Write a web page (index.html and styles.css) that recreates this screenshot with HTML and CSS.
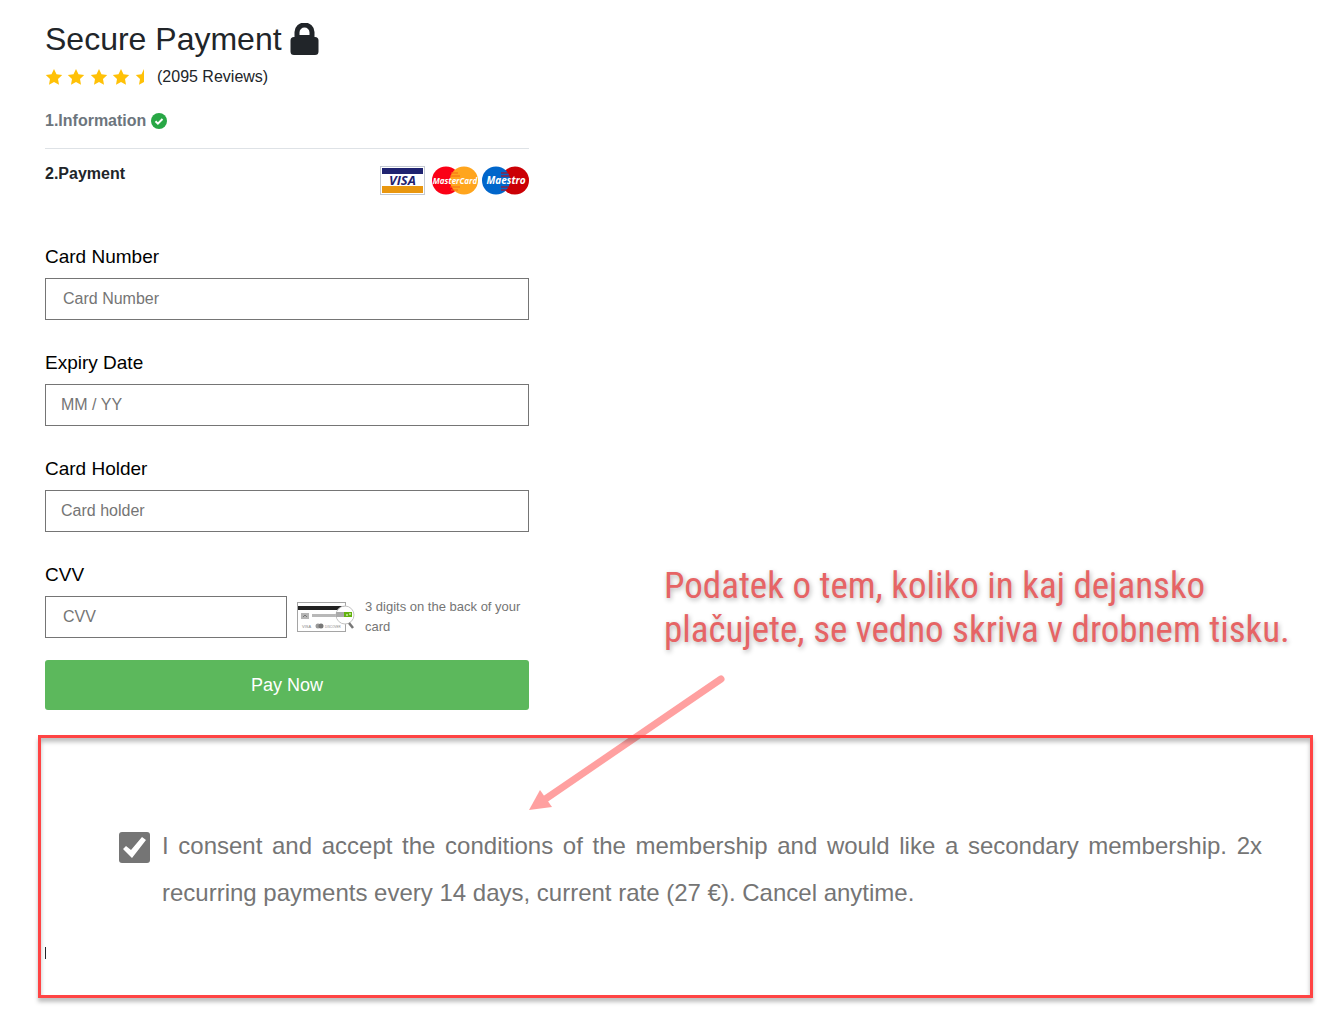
FILE: index.html
```
<!DOCTYPE html>
<html lang="en">
    <head>
        <meta charset="utf-8">
        <title>Secure Payment</title>
        <link rel="stylesheet" href="styles.css">
    </head>
    <body>
        <main class="page">
            <form class="checkout">
                <h1>Secure Payment
                    <svg class="lock" viewBox="0 0 28 32"><path d="M4 14V9a10 9.500 0 0 1 20 0v5h.5a3.500 3.500 0 0 1 3.500 3.500v11a3.500 3.500 0 0 1-3.500 3.500h-21A3.500 3.500 0 0 1 0 28.500v-11A3.500 3.500 0 0 1 3.500 14H4zm5-2h10V9.500a5 5 0 0 0-10 0V12z"/></svg>
                </h1>
                <div class="rating">
                    <svg class="stars" viewBox="0 0 102 18">
                        <defs>
                            <path id="star" d="M9 1l2.500 5.200 5.700.8-4.200 4 1 5.700L9 14l-5 2.700 1-5.700L.8 7l5.700-.8z"/>
                            <clipPath id="half"><rect x="0" y="0" width="9" height="18"/></clipPath>
                        </defs>
                        <use href="#star"/>
                        <use href="#star" x="22"/>
                        <use href="#star" x="45"/>
                        <use href="#star" x="67"/>
                        <g transform="translate(90 0)" clip-path="url(#half)"><use href="#star"/></g>
                    </svg>
                    <span>(2095 Reviews)</span>
                </div>
                <div class="step step-done">1.Information
                    <svg class="check" viewBox="0 0 16 16"><circle cx="8" cy="8" r="8"/><path d="M4.500 8.200l2.400 2.400 4.600-4.600"/></svg>
                </div>
                <div class="step step-current">
                    <span>2.Payment</span>
                    <svg class="cards" viewBox="0 0 149 30">
                        <rect x=".5" y=".5" width="44" height="28" fill="#fff" stroke="#c3c9d2"/>
                        <rect x="2" y="2" width="41" height="6" fill="#1f2370"/>
                        <rect x="2" y="20" width="41" height="7" fill="#e9970f"/>
                        <text class="visa" x="22.500" y="19">VISA</text>
                        <circle cx="66" cy="14.500" r="14" fill="#fb0016"/>
                        <circle cx="84" cy="14.500" r="14" fill="#ffa51d"/>
                        <path d="M71 7h7M70 10h10M70 21h10M71 24h7" stroke="#f76a15"/>
                        <text class="brand" x="75" y="18">MasterCard</text>
                        <circle cx="135" cy="14.500" r="14" fill="#cb0005"/>
                        <circle cx="116" cy="14.500" r="14" fill="#0066cb"/>
                        <path d="M121 7h7M121 10h8M121 21h8M121 24h7" stroke="#cb0005"/>
                        <text class="brand maestro" x="126" y="18">Maestro</text>
                    </svg>
                </div>

                <div class="field">
                    <label for="number">Card Number</label>
                    <input id="number" class="wide-pad" type="text" placeholder="Card Number">
                </div>
                <div class="field">
                    <label for="expiry">Expiry Date</label>
                    <input id="expiry" type="text" placeholder="MM / YY">
                </div>
                <div class="field">
                    <label for="holder">Card Holder</label>
                    <input id="holder" type="text" placeholder="Card holder">
                </div>
                <div class="field field-cvv">
                    <label for="cvv">CVV</label>
                    <div class="cvv-row">
                        <input id="cvv" class="wide-pad" type="text" placeholder="CVV">
                        <svg class="cvv-card" viewBox="0 0 58 30">
                            <rect x=".5" y=".5" width="48" height="29" fill="#fff" stroke="#a5a5a5"/>
                            <rect x="1" y="4" width="47" height="4" fill="#222"/>
                            <rect x="4" y="11" width="8" height="6" fill="#b5b5b5"/>
                            <path d="M6 15l2-2 2 2" fill="none" stroke="#777"/>
                            <rect x="15" y="12" width="28" height="3" fill="#b8b8b8"/>
                            <text x="5" y="26">VISA</text>
                            <circle cx="21" cy="24" r="2.500" fill="#999"/>
                            <circle cx="24" cy="24" r="2.500" fill="#777"/>
                            <text x="28" y="26" class="discover">DISCOVER</text>
                            <circle cx="48" cy="13" r="9" fill="#fff" stroke="#c4c4c4"/>
                            <rect x="39" y="10" width="8" height="5" fill="#aaa"/>
                            <rect x="47" y="10" width="8" height="5" fill="#63b30d"/>
                            <path d="M49 13h2m1-1h2" stroke="#fff"/>
                            <path d="M52 21l4 5" stroke="#777" stroke-width="2.500"/>
                        </svg>
                        <small>3 digits on the back of your card</small>
                    </div>
                </div>
                <button class="pay" type="submit">Pay Now</button>
            </form>

            <section class="fine-print">
                <input id="consent" type="checkbox" checked>
                <label for="consent">I consent and accept the conditions of the membership and would like a secondary membership. 2x recurring payments every 14 days, current rate (27 €). Cancel anytime.</label>
                <i class="caret"></i>
            </section>

            <p class="note" lang="sl">Podatek o tem, koliko in kaj dejansko plačujete, se vedno skriva v drobnem tisku.</p>
            <svg class="arrow" viewBox="0 0 200 142">
                <path d="M194 9L14 132" fill="none" stroke="#ff4444" stroke-width="7" stroke-linecap="round"/>
                <path d="M2 140l11-20 12 17z" fill="#ff4444"/>
            </svg>
        </main>
    </body>
</html>
```

FILE: styles.css
```
* { box-sizing: border-box; }
body { margin: 0; background: #fff; color: #212529; font-family: "Liberation Sans", Arial, sans-serif; font-size: 16px; line-height: 24px; }
.page { position: relative; padding: 20px 11px 36px 38px; }
.checkout { width: 484px; margin-left: 7px; }
h1 { display: flex; align-items: center; gap: 8px; margin: 0; font-size: 32px; line-height: 38px; font-weight: 400; }
.lock { width: 29px; height: 32px; fill: #212529; }
.rating { display: flex; align-items: center; gap: 10px; margin-top: 7px; }
.stars { width: 102px; height: 18px; fill: #ffc107; }
.step { font-weight: 700; }
.step-done { display: flex; align-items: center; gap: 5px; margin-top: 20px; padding-bottom: 15px; border-bottom: 1px solid #dee2e6; color: #6c757d; }
.check { width: 16px; height: 16px; fill: #28a745; }
.check path { fill: none; stroke: #fff; stroke-width: 2; }
.step-current { display: flex; justify-content: space-between; margin-top: 13px; margin-bottom: 47px; }
.cards { width: 149px; height: 30px; margin-top: 4px; }
.cards text { fill: #fff; text-anchor: middle; font-family: "Open Sans", sans-serif; font-style: italic; font-weight: 700; }
.cards .visa { fill: #1f2370; font-size: 13px; }
.cards .brand { font-size: 8px; }
.cards .maestro { font-size: 10px; }
.field { margin-bottom: 29px; }
.field-cvv { margin-bottom: 22px; }
.field label { display: block; margin-bottom: 7px; color: #000; font-size: 19px; line-height: 28px; }
.field input { display: block; width: 100%; height: 42px; padding: 0 15px; border: 1px solid #757575; background: #fff; font: inherit; }
.field .wide-pad { padding-left: 17px; }
input::placeholder { color: #757575; }
.cvv-row { display: grid; grid-template-columns: 242px 58px 1fr; gap: 10px; align-items: center; }
.cvv-card { width: 58px; height: 30px; }
.cvv-card text { fill: #888; font-size: 4px; }
.cvv-card .discover { font-size: 3px; }
.cvv-row small { color: #757575; font-size: 13px; line-height: 20px; }
.pay { display: block; width: 100%; height: 50px; border: 0; border-radius: 3px; background: #5cb85c; color: #fff; font: inherit; font-size: 18px; }

/* consent box */
.fine-print { position: relative; z-index: 1; display: flex; align-items: flex-start; gap: 12px; min-height: 263px; margin-top: 25px; padding: 84px 48px 0 78px; border: 3px solid #ff4444; box-shadow: 0 4px 4px rgba(0, 0, 0, .25), inset 0 4px 4px rgba(0, 0, 0, .25); }
.fine-print label { color: #757575; font-size: 24px; line-height: 47px; text-align: justify; }
.fine-print input { appearance: none; flex: none; width: 31px; height: 31px; margin: 10px 0 0; border-radius: 3px; background: #757575; }
.fine-print input:checked::before { content: ""; display: block; width: 31px; height: 31px; background: #fff; clip-path: polygon(4px 17px, 7px 14px, 12px 18px, 23px 5px, 27px 8px, 13px 26px); }
.caret { position: absolute; top: 209px; left: 4px; width: 1px; height: 12px; background: #212529; }

/* annotation */
.note { position: absolute; top: 564px; left: 664px; width: 640px; margin: 0; color: #e66465; font-family: "Roboto Condensed", Roboto, sans-serif; font-size: 37px; line-height: 44px; text-shadow: 1px 2px 5px rgba(0, 0, 0, .3); }
.arrow { position: absolute; top: 670px; left: 527px; width: 200px; height: 142px; opacity: .5; }
```
